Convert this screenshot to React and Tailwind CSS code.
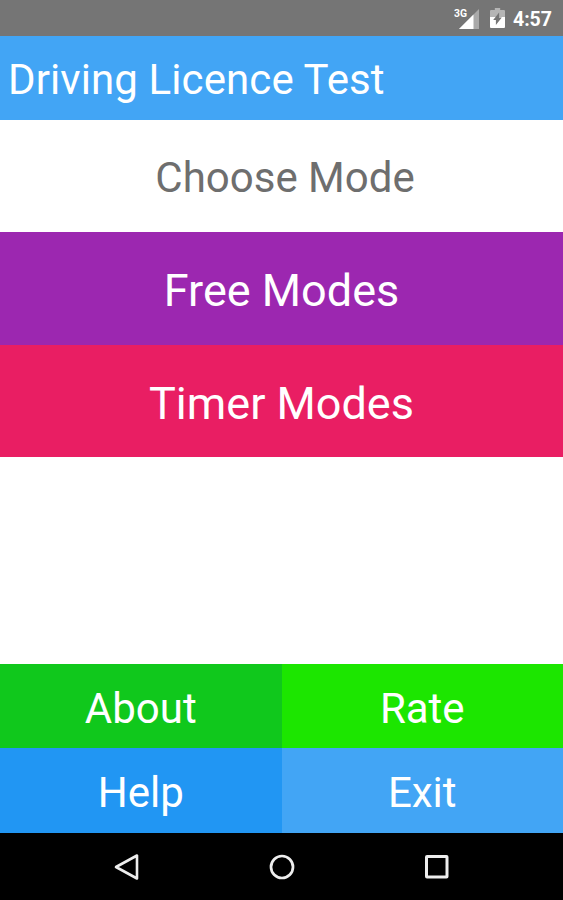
import React from "react";

const modes = [
  { label: "Free Modes", className: "bg-[#9c27b0] h-[113px] pt-[4px]" },
  { label: "Timer Modes", className: "bg-[#e91e63] h-[112px] pt-[4px]" },
];

const actions = [
  { label: "About", className: "bg-[#10c81c] h-[84px] pt-[5px]" },
  { label: "Rate", className: "bg-[#1ce600] h-[84px] pt-[5px]" },
  { label: "Help", className: "bg-[#2196f3] h-[85px] pt-[4px]" },
  { label: "Exit", className: "bg-[#42a5f5] h-[85px] pt-[4px]" },
];

const StatusBar = () => (
  <div className="h-9 bg-[#757575] flex items-center justify-end pr-[11px] text-white">
    <svg width="26" height="24" viewBox="0 0 26 24" className="mr-[10px]">
      <path d="M25 3V23H5Z" fill="#a9a9a9" />
      <path d="M19.5 8.5V23H5Z" fill="#fff" />
      <text x="0" y="11" fontSize="10.5" fontWeight="700" fill="#fff" fontFamily="Roboto, sans-serif" textLength="13" lengthAdjust="spacingAndGlyphs">
        3G
      </text>
    </svg>
    <svg width="15" height="20" viewBox="0 0 14 20" preserveAspectRatio="none" className="mr-[8px]">
      <path d="M4.5 0h5v2H13q1 0 1 1v6H0V3q0-1 1-1h3.500Z" fill="#b5b5b5" />
      <path d="M0 9h14v10q0 1-1 1H1q-1 0-1-1Z" fill="#fff" />
      <path d="M8.500 4.500V9.500H11L5.500 17V12H3Z" fill="#757575" />
    </svg>
    <span className="text-[19.5px] leading-none font-bold mt-[3px]">4:57</span>
  </div>
);

const NavBar = () => (
  <div className="h-[67px] bg-black grid grid-cols-[203px_157px_154px] items-center justify-start">
    <svg width="26" height="28" viewBox="0 0 26 28" className="justify-self-end mr-[63px]" fill="none" stroke="#eee" strokeWidth="2.6" strokeLinejoin="round">
      <path d="M23 2.500V25.500L2 14Z" />
    </svg>
    <svg width="28" height="28" viewBox="0 0 28 28" className="justify-self-center" fill="none" stroke="#eee" strokeWidth="2.7">
      <circle cx="14" cy="14" r="11" />
    </svg>
    <svg width="28" height="28" viewBox="0 0 28 28" className="justify-self-center" fill="none" stroke="#eee" strokeWidth="3" strokeLinejoin="round">
      <rect x="3.500" y="3.500" width="20.500" height="20.500" rx="0.500" />
    </svg>
  </div>
);

const App = () => {
  return (
    <div className="w-[563px] h-[900px] flex flex-col bg-white overflow-hidden font-[Roboto,sans-serif]">
      <StatusBar />
      <header className="h-[84px] bg-[#42a5f5] flex items-center pl-[8px] pt-[3px] text-white text-[42px] leading-none tracking-[0.1px]">
        <h1>Driving Licence Test</h1>
      </header>
      <h2 className="h-[112px] flex items-center justify-center pl-[7px] pt-[4px] text-[42px] leading-none text-[#6e6e6e]">
        Choose Mode
      </h2>
      {modes.map((mode) => (
        <button key={mode.label} className={`${mode.className} w-full flex items-center justify-center text-white text-[45px] leading-none`}>
          {mode.label}
        </button>
      ))}
      <div className="flex-1"></div>
      <div className="grid grid-cols-2">
        {actions.map((action) => (
          <button key={action.label} className={`${action.className} flex items-center justify-center text-white text-[42px] leading-none`}>
            {action.label}
          </button>
        ))}
      </div>
      <NavBar />
    </div>
  );
};

export default App;
